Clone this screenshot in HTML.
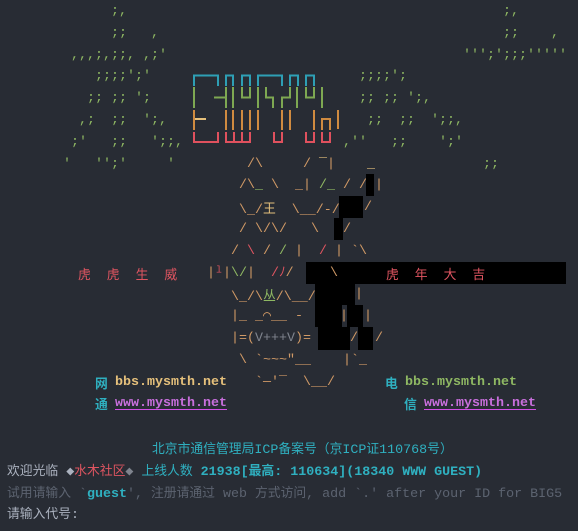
<!DOCTYPE html>
<html><head><meta charset="utf-8">
<style>
html,body{margin:0;padding:0;background:#282c34;}
body{width:578px;height:531px;position:relative;overflow:hidden;font-family:"Liberation Mono","DejaVu Sans Mono","Noto Sans CJK SC",monospace;font-size:13.33px;color:#d19a66;}
.r{position:absolute;white-space:pre;line-height:21.8px;}
.g{color:#8fb863}
.o{color:#d19a66}
.y{color:#e5c07b}
.rd{color:#e05561}
.c{color:#2fb0c0}
.gr{color:#5c6370}
.lt{color:#abb2bf}
.m{color:#c86fdc;text-decoration:underline;text-decoration-color:#d24fe6;text-underline-offset:3px}
.b{font-weight:bold}
.k{position:absolute;background:#000}
.cj{font-family:"Noto Sans CJK SC",sans-serif;font-size:12.8px}
.gv{color:#7f848e}
</style></head><body>

<div class="r g" style="top:1px;left:111px">;,</div>
<div class="r g" style="top:1px;left:503px">;,</div>
<div class="r g" style="top:22.8px;left:111px">;;</div>
<div class="r g" style="top:22.8px;left:151px">,</div>
<div class="r g" style="top:22.8px;left:503px">;;</div>
<div class="r g" style="top:22.8px;left:551px">,</div>
<div class="r g" style="top:44.6px;left:71px">,,,;,;;,</div>
<div class="r g" style="top:44.6px;left:143px">,;'</div>
<div class="r g" style="top:44.6px;left:463px">''';';;;'''''</div>
<div class="r g" style="top:66.4px;left:95px">;;;;';'</div>
<div class="r g" style="top:66.4px;left:359px">;;;;';</div>
<div class="r g" style="top:88.2px;left:87px">;; ;; ';</div>
<div class="r g" style="top:88.2px;left:359px">;; ;; ';,</div>
<div class="r g" style="top:110px;left:79px">,;  ;;  ';,</div>
<div class="r g" style="top:110px;left:367px">;;  ;;  ';;,</div>
<div class="r g" style="top:131.8px;left:71px">;'   ;;   ';;,</div>
<div class="r g" style="top:131.8px;left:343px">,''   ;;    ';'</div>
<div class="r g" style="top:153.6px;left:63px">'   '';'     '</div>
<div class="r g" style="top:153.6px;left:483px">;;</div>

<svg style="position:absolute;left:0;top:0" width="578" height="531" fill="none" stroke-width="2">
<g stroke="#2e9fb5">
<path d="M194,86V75.5H218V86"/><path d="M226,86V75.5H233V86"/><path d="M242,86V75.5H250V86"/>
<path d="M258,86V75.5H282V86"/><path d="M290,86V75.5H298V86"/><path d="M306,86V75.5H314V86"/>
</g>
<g stroke="#7ea852">
<path d="M194,87V108"/><path d="M214,97.5H226"/><path d="M226,87V108"/><path d="M233,87V108"/>
<path d="M242,87V97.5H250V87"/><path d="M258,87V108"/><path d="M266,87V97.5H273V108"/>
<path d="M290,87V97.5H282V108"/><path d="M297,87V108"/><path d="M306,87V97.5H314V87"/><path d="M322,87V108"/>
</g>
<g stroke="#d08b40">
<path d="M194,110V130"/><path d="M226,110V130"/><path d="M233,110V130"/><path d="M242,110V130"/>
<path d="M250,110V130"/><path d="M258,110V130"/><path d="M282,110V130"/><path d="M290,110V130"/>
<path d="M314,110V130"/><path d="M338,110V129"/><path d="M322,130V119H330V130"/>
</g>
<path d="M195,119H206" stroke="#e5c07b"/>
<g stroke="#e0515e">
<path d="M194,132V142H218V132"/><path d="M226,132V142H250V132"/><path d="M234,132V142"/><path d="M242,132V142"/>
<path d="M274,132V142H282V132"/><path d="M306,132V142H314V132"/><path d="M322,132V142H330V132"/>
</g>
</svg>

<div class="r" style="top:153.6px;left:247px">/\</div>
<div class="r" style="top:153.6px;left:303px">/ <span class="y">‾</span>|</div>
<div class="r y" style="top:153.6px;left:367px">_</div>

<div class="r" style="top:175.4px;left:239px">/\<span class="g">_</span> \  _| <span class="g">/_</span> / /</div>
<div class="k" style="left:366px;top:174px;width:8px;height:22px"></div>
<div class="r" style="top:175.4px;left:375px">|</div>

<div class="r" style="top:197.2px;left:239px">\_/<span class="cj y">王</span>  \__/-/</div>
<div class="k" style="left:339px;top:196px;width:24px;height:22px"></div>
<div class="r" style="top:197.2px;left:364px">/</div>

<div class="r" style="top:219px;left:239px">/ \/\/   \</div>
<div class="k" style="left:334px;top:218px;width:9px;height:22px"></div>
<div class="r" style="top:219px;left:343px">/</div>

<div class="r" style="top:240.8px;left:231px">/ <span class="rd">\</span> / <span class="g">/</span> |  <span class="rd">/</span> | `\</div>

<div class="r rd" style="top:262.6px;left:78px"><span class="cj">虎</span>  <span class="cj">虎</span>  <span class="cj">生</span>  <span class="cj">威</span></div>
<div class="r" style="top:262.6px;left:207px">|<span class="rd">ˡ</span>|<span class="g">\/</span>|  <span class="rd">/ﾉ</span>/</div>
<div class="k" style="left:306px;top:262px;width:260px;height:22px"></div>
<div class="r" style="top:262.6px;left:330px">\</div>
<div class="r rd" style="top:262.6px;left:386px"><span class="cj">虎</span>  <span class="cj">年</span>  <span class="cj">大</span>  <span class="cj">吉</span></div>

<div class="r" style="top:284.4px;left:231px">\_/\<span class="cj g">丛</span>/\__/</div>
<div class="k" style="left:315px;top:283px;width:40px;height:22px"></div>
<div class="r" style="top:284.4px;left:355px">|</div>

<div class="r" style="top:306.2px;left:231px">|_ _<span style="display:inline-block;width:8px">⌒</span>__ -</div>
<div class="k" style="left:315px;top:305px;width:27px;height:22px"></div>
<div class="r" style="top:306.2px;left:340px">|</div>
<div class="k" style="left:347px;top:305px;width:16px;height:22px"></div>
<div class="r" style="top:306.2px;left:364px">|</div>

<div class="r" style="top:328px;left:231px">|=(<span class="gv">V+++V</span>)=</div>
<div class="k" style="left:318px;top:327px;width:32px;height:23px"></div>
<div class="r" style="top:328px;left:350px">/</div>
<div class="k" style="left:358px;top:327px;width:15px;height:23px"></div>
<div class="r" style="top:328px;left:375px">/</div>

<div class="r" style="top:349.8px;left:239px">\ `~~~"__</div>
<div class="r" style="top:349.8px;left:343px">|`_</div>

<div class="r" style="top:371.6px;left:255px">`—'‾</div>
<div class="r" style="top:371.6px;left:303px">\__/</div>

<div class="r c cj b" style="top:371.6px;left:95px">网</div>
<div class="r y b" style="top:371.6px;left:115px">bbs.mysmth.net</div>
<div class="r c cj b" style="top:371.6px;left:385px">电</div>
<div class="r g b" style="top:371.6px;left:405px">bbs.mysmth.net</div>
<div class="r c cj b" style="top:393.4px;left:95px">通</div>
<div class="r m b" style="top:393.4px;left:115px">www.mysmth.net</div>
<div class="r c cj b" style="top:393.4px;left:404px">信</div>
<div class="r m b" style="top:393.4px;left:424px">www.mysmth.net</div>

<div class="r c" style="top:437px;left:152px"><span class="cj">北京市通信管理局</span>ICP<span class="cj">备案号（京</span>ICP<span class="cj">证</span>110768<span class="cj">号）</span></div>
<div class="r" style="top:458.8px;left:7px"><span class="cj lt">欢迎光临</span> <span class="lt">◆</span><span class="cj rd">水木社区</span><span class="gv">◆</span> <span class="cj c">上线人数</span><span class="c b"> 21938[<span class="cj">最高</span>: 110634](18340 WWW GUEST)</span></div>
<div class="r gr" style="top:480.6px;left:7px"><span class="cj">试用请输入</span> `<span class="c b">guest</span>', <span class="cj">注册请通过</span> web <span class="cj">方式访问</span>, add `.' after your ID for BIG5</div>
<div class="r lt" style="top:502.4px;left:7px"><span class="cj">请输入代号</span>:</div>

</body></html>
